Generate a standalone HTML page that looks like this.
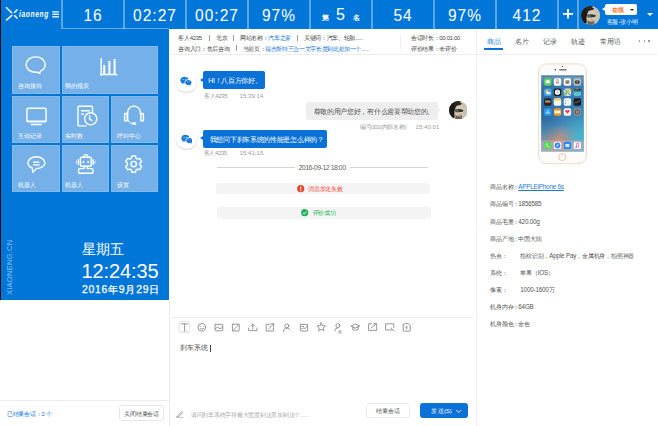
<!DOCTYPE html>
<html><head><meta charset="utf-8">
<style>
*{margin:0;padding:0;box-sizing:border-box}
html,body{width:658px;height:426px;overflow:hidden;background:#fff;font-family:"Liberation Sans",sans-serif;position:relative}
.a{position:absolute}
.hdr{left:0;top:0;width:658px;height:29px;background:#0076d8}
.edge{left:0;top:0;width:1px;height:300px;background:#1a0c0c}
.box{top:0;height:29px;width:62px;border-left:2px solid rgba(255,255,255,.36);color:#fff;font-size:15.5px;text-align:center;line-height:29px;letter-spacing:1px;text-indent:0}
.box span{display:inline-block;transform:scaleY(1.09);transform-origin:50% 60%;position:relative;top:0.9px}
.lp{left:0;top:29px;width:169px;height:271px;background:#0076d8}
.tile{background:#75b1e8;box-shadow:inset 0 0 0 1px rgba(255,255,255,.12);color:#fff;font-size:6px;font-weight:500}
.tile span{position:absolute;left:6px;bottom:3.5px;white-space:nowrap}
.t{white-space:nowrap;line-height:1}
.i1{color:#4a4a4a;font-size:6px;font-weight:500;letter-spacing:-0.35px}
.av{width:20.5px;height:20.5px;border-radius:50%;background:#fff;box-shadow:0 0.8px 1.6px rgba(0,0,0,.2)}
.bb{background:#0a72d6;border-radius:2px}
.bt{color:#fff;font-size:7px;letter-spacing:-0.3px}
.pr{color:#555;font-size:6.3px;letter-spacing:-0.2px}
.mt{color:#999;font-size:6px;letter-spacing:-0.35px}
</style></head><body>
<div class="a hdr"></div>
<!-- header boxes -->
<div class="a box" style="left:61px"><span>16</span></div>
<div class="a box" style="left:123px"><span>02:27</span></div>
<div class="a box" style="left:185px"><span>00:27</span></div>
<div class="a box" style="left:247px"><span>97%</span></div>
<div class="a box" style="left:309px"></div>
<div class="a box" style="left:371px"><span>54</span></div>
<div class="a box" style="left:433px"><span>97%</span></div>
<div class="a box" style="left:495px"><span>412</span></div>
<div class="a box" style="left:557px;width:22px;border-right:2px solid rgba(255,255,255,.36)"></div>

<!-- left panel -->
<div class="a lp"></div>
<div class="a" style="left:63px;top:28px;width:106px;height:1px;background:rgba(255,255,255,.4)"></div>

<div class="a edge"></div>
<!-- tiles -->
<div class="a tile" style="left:12px;top:46px;width:48px;height:48px"><span style="left:6.3px;bottom:3.5px">咨询接待</span></div>
<div class="a tile" style="left:61.5px;top:46px;width:96.5px;height:48px"><span style="left:3.3px;bottom:3.5px">我的报表</span></div>
<div class="a tile" style="left:12px;top:96px;width:48px;height:47px"><span style="left:6.3px;bottom:2.2px">互动记录</span></div>
<div class="a tile" style="left:61.5px;top:96px;width:47.5px;height:47px"><span style="left:3.3px;bottom:2.2px">实时数</span></div>
<div class="a tile" style="left:111px;top:96px;width:47px;height:47px"><span style="left:6.3px;bottom:2.2px">呼叫中心</span></div>
<div class="a tile" style="left:12px;top:145px;width:48px;height:47px"><span style="left:6.3px;bottom:2.0px">机器人</span></div>
<div class="a tile" style="left:61.5px;top:145px;width:47.5px;height:47px"><span style="left:3.3px;bottom:2.0px">机器人</span></div>
<div class="a tile" style="left:111px;top:145px;width:47px;height:47px"><span style="left:6.3px;bottom:2.0px">设置</span></div>

<!-- tile icons -->
<svg class="a" style="left:0;top:0" width="169" height="300" viewBox="0 0 169 300">
<g fill="none" stroke="#fff" stroke-width="1.4" stroke-linejoin="round" stroke-linecap="round">
<path d="M40.2,71.3 C43.5,70 45.2,67.5 45.2,64.6 C45.2,60.2 40.9,56.9 35.6,56.9 C30.3,56.9 26.1,60.2 26.1,64.6 C26.1,69 30.3,72.3 35.6,72.3 L37.6,72.3 L39.8,73.4 Z"/>
<line x1="101.2" y1="58.7" x2="101.2" y2="75"/>
<line x1="100.5" y1="74.5" x2="117" y2="74.5"/>
<rect x="26.9" y="108.3" width="19.2" height="13.5" rx="1.5"/>
<line x1="27.2" y1="121.3" x2="45.8" y2="121.3" stroke-width="1.6"/>
<line x1="31.4" y1="124.5" x2="41.3" y2="124.5"/>
<path d="M92.5,112 L92.5,107.5 Q92.5,106.3 91.3,106.3 L79.2,106.3 Q78,106.3 78,107.5 L78,124.7 Q78,125.9 79.2,125.9 L86,125.9"/>
<line x1="81.5" y1="110.7" x2="89.5" y2="110.7"/>
<line x1="81.5" y1="114.3" x2="83.3" y2="114.3"/>
<circle cx="90.7" cy="118.8" r="6.1" fill="#75b1e8"/>
<path d="M89.6,115.8 L89.6,119 L92,120.6"/>
<path d="M127.7,118.5 L127.7,112.6 C127.7,108.6 130.4,106.2 134,106.2 C137.6,106.2 140.3,108.6 140.3,112.6 L140.3,114"/>
<rect x="124.6" y="113.5" width="2.5" height="7.4" rx="0.5"/>
<rect x="140.9" y="113.5" width="2.5" height="7.4" rx="0.5"/>
<path d="M127.7,118.5 Q128.3,123.4 132.2,123.4" stroke-width="1"/>
<path d="M36.2,168.6 C41.4,168.4 44.9,165.8 44.9,163 C44.9,159.6 41.2,156.7 36.4,156.7 C31.6,156.7 27.9,159.6 27.9,163 C27.9,165.2 29.6,167 32.3,168 L32.8,172.4 Z"/>
<line x1="33.8" y1="162.2" x2="38.6" y2="162.2"/>
<line x1="33.6" y1="164.9" x2="39.2" y2="164.9"/>
<rect x="80.4" y="157.2" width="10.8" height="9" rx="1"/>
<path d="M84,157 L84,155.8 Q84,154.6 85.8,154.6 Q87.6,154.6 87.6,155.8 L87.6,157"/>
<path d="M84.3,166.3 L84.3,168.6 L79.6,168.6 Q78.6,168.6 78.6,169.6 L78.6,172.3 Q78.6,173.2 79.6,173.2 L92,173.2 Q93,173.2 93,172.3 L93,169.6 Q93,168.6 92,168.6 L87.3,168.6 L87.3,166.3"/>
<line x1="78.4" y1="159.8" x2="78.4" y2="164.4"/>
<line x1="93.2" y1="159.8" x2="93.2" y2="164.4"/>
<path d="M131.34,158.26 L131.83,156.01 L135.57,156.01 L136.06,158.26 L137.58,159.14 L139.77,158.44 L141.64,161.67 L139.94,163.22 L139.94,164.98 L141.64,166.53 L139.77,169.76 L137.58,169.06 L136.06,169.94 L135.57,172.19 L131.83,172.19 L131.34,169.94 L129.82,169.06 L127.63,169.76 L125.76,166.53 L127.46,164.98 L127.46,163.22 L125.76,161.67 L127.63,158.44 L129.82,159.14Z"/>
<circle cx="133.7" cy="164.1" r="2.7"/>
</g>
<g fill="#fff">
<rect x="103.2" y="65" width="2" height="9.5"/>
<rect x="108.4" y="61" width="2" height="13.5"/>
<rect x="113.6" y="59" width="2" height="15.5"/>
<circle cx="83.3" cy="161.9" r="1"/>
<circle cx="88.1" cy="161.9" r="1"/>
<rect x="132" y="122.2" width="4.2" height="2.5" rx="1"/>
</g>
<g stroke="#fff" stroke-width="0.8" fill="none">
<line x1="76.5" y1="160.6" x2="76.5" y2="163.6"/>
<line x1="95" y1="160.6" x2="95" y2="163.6"/>
</g>
<text x="7" y="295" transform="rotate(-90 7 295)" dx="0" dy="5.3" fill="rgba(255,255,255,0.55)" font-size="7.6" letter-spacing="0.2" font-family="Liberation Sans, sans-serif">XIAONENG.CN</text>
</svg>
<!-- clock -->
<div class="a t" style="left:82px;top:242px;color:#fff;font-size:14px;font-weight:500">星期五</div>
<div class="a t" style="left:81.5px;top:261px;color:#fff;font-size:20px;letter-spacing:-0.1px">12:24:35</div>
<div class="a t" style="left:82px;top:284.5px;color:#fff;font-size:10.4px;font-weight:500;letter-spacing:0.75px;-webkit-text-stroke:0.25px #fff">2016年9月29日</div>


<!-- logo -->
<svg class="a" style="left:0;top:0" width="61" height="29" viewBox="0 0 61 29">
<g stroke="#fff" stroke-width="1.5" stroke-linecap="butt" fill="none">
<line x1="6" y1="7.2" x2="12.2" y2="13.2"/>
<line x1="6" y1="20.5" x2="12.2" y2="15.1"/>
<line x1="17.4" y1="9.4" x2="14.2" y2="12.8"/>
<line x1="14.2" y1="15.2" x2="17.4" y2="18.6"/>
</g>
<g fill="#fff"><rect x="52.3" y="11.3" width="6.6" height="1.3"/><rect x="52.3" y="13.7" width="6.6" height="1.3"/><rect x="52.3" y="16.2" width="6.6" height="1.3"/></g>
</svg>
<div class="a t" style="left:18.5px;top:9px;color:#fff;font-size:9.8px;font-style:italic;font-weight:bold;letter-spacing:0.9px;transform:scaleX(0.68);transform-origin:0 0">iaoneng</div>
<!-- rank -->
<div class="a t" style="left:321.5px;top:14px;color:#fff;font-size:7px;font-weight:bold">第</div>
<div class="a t" style="left:336px;top:7px;color:#fff;font-size:16px">5</div>
<div class="a t" style="left:353.3px;top:14px;color:#fff;font-size:7px;font-weight:bold">名</div>
<!-- plus -->
<svg class="a" style="left:563px;top:9.3px" width="10" height="10"><rect x="0" y="4" width="10" height="1.8" fill="#fff"/><rect x="4.1" y="0" width="1.8" height="9.6" fill="#fff"/></svg>
<!-- avatar header -->
<svg class="a" style="left:580.8px;top:5.6px" width="19.0" height="19.0" viewBox="0 0 20 20"><defs><clipPath id="cf1"><circle cx="10" cy="10" r="10"/></clipPath></defs><g clip-path="url(#cf1)"><rect width="20" height="20" fill="#b8b0a2"/><rect x="11" y="0" width="9" height="20" fill="#c9c2b4"/><path d="M0,0 L13,0 Q9,3 7,7 Q5,12 6,17 L4,20 L0,20 Z" fill="#1c1814"/><path d="M5,2 Q10,-1 14,3 L11,5 Q8,4 6,7 Z" fill="#2a2824"/><ellipse cx="11" cy="11" rx="4.6" ry="6.5" fill="#d9c8b6"/><path d="M6.5,9.2 Q11,8 15.5,9.6 L15,11.6 Q12,12 10,12.2 L7,12 Z" fill="#2e3a34"/><ellipse cx="9" cy="10.6" rx="1.4" ry="0.9" fill="#6a8078"/><path d="M7,15 Q11,17.5 14,15 L14,20 L7,20 Z" fill="#3a3028" opacity="0.6"/><ellipse cx="11.5" cy="14.5" rx="1.5" ry="0.6" fill="#9a7060" opacity="0.7"/></g></svg>
<div class="a" style="left:605.3px;top:4.1px;width:32px;height:10.5px;background:#fff;border-radius:2px"></div>
<div class="a" style="left:602.1px;top:7px;width:0;height:0;border-top:2.2px solid transparent;border-bottom:2.2px solid transparent;border-right:3.3px solid #fff"></div>
<div class="a t" style="left:612.4px;top:6.6px;color:#f5731e;font-size:6px;font-weight:bold;letter-spacing:-0.3px">在线</div>
<div class="a" style="left:630.3px;top:8.6px;width:0;height:0;border-left:2px solid transparent;border-right:2px solid transparent;border-top:2.2px solid #222"></div>
<div class="a t" style="left:606.6px;top:19.3px;color:#f2f7fd;font-size:6px;font-weight:500;letter-spacing:-0.2px">客服-张小明</div>
<div class="a" style="left:646.8px;top:13.2px;width:0;height:0;border-left:3.2px solid transparent;border-right:3.2px solid transparent;border-top:3.7px solid #fff"></div>

<!-- bottom left -->
<div class="a" style="left:0;top:400px;width:169px;height:1px;background:#ececec"></div>
<div class="a" style="left:169px;top:300px;width:1px;height:126px;background:#ececec"></div>
<div class="a t" style="left:6.8px;top:410.9px;color:#1a78d8;font-size:6px;letter-spacing:-0.2px">已结束会话：2 个</div>
<div class="a t" style="left:119px;top:405.2px;width:45.2px;height:16px;border:1px solid #e6e6e6;border-radius:3px;color:#555;font-size:6px;letter-spacing:-0.2px;text-align:center;line-height:17.3px">关闭结束会话</div>

<!-- info bar -->
<div class="a t i1" style="left:178.4px;top:35px">客人4235</div>
<div class="a" style="left:209.2px;top:35.3px;width:0.9px;height:5.6px;background:#9a9a9a"></div>
<div class="a t i1" style="left:216px;top:35px">北京</div>
<div class="a" style="left:233.1px;top:35.3px;width:0.9px;height:5.6px;background:#9a9a9a"></div>
<div class="a t i1" style="left:240.1px;top:35px">网站名称：</div>
<div class="a t i1" style="left:268.3px;top:35px;color:#1a78d8">汽车之家</div>
<div class="a" style="left:297px;top:35.3px;width:0.9px;height:5.6px;background:#9a9a9a"></div>
<div class="a t i1" style="left:304px;top:35px">关键词：汽车、轮胎......</div>
<div class="a t i1" style="left:178.4px;top:45.6px">咨询入口：售后咨询</div>
<div class="a" style="left:235.6px;top:45.3px;width:0.9px;height:5.6px;background:#9a9a9a"></div>
<div class="a t i1" style="left:242.8px;top:45.6px">当前页：</div>
<div class="a t i1" style="left:265.1px;top:45.6px;color:#1a78d8">福吉斯特三合一文字长度到此处加一个......</div>
<div class="a" style="left:400px;top:35px;width:1px;height:14px;background:#eee"></div>
<div class="a t i1" style="left:411.1px;top:35px">会话时长：00:01:00</div>
<div class="a t i1" style="left:411.1px;top:45.6px">评价结果：未评价</div>
<div class="a" style="left:170px;top:54px;width:306px;height:1px;background:#eee"></div>
<div class="a" style="left:476px;top:29px;width:1px;height:397px;background:#eee"></div>

<!-- messages -->
<div class="a av" style="left:176px;top:71px"></div>
<svg class="a" style="left:180.2px;top:76px" width="11.8" height="10" viewBox="0 0 14 12"><path fill="#1a78d8" d="M5.2,1 C2.4,1 0.3,2.8 0.3,5 C0.3,6.2 1,7.3 2,8 L1.6,9.6 L3.5,8.6 C4,8.8 4.6,8.9 5.2,8.9 C5.3,8.9 5.4,8.9 5.5,8.9 C5.4,8.5 5.3,8.1 5.3,7.7 C5.3,5.5 7.4,3.8 10,3.8 C10.1,3.8 10.2,3.8 10.3,3.8 C9.7,2.2 7.6,1 5.2,1Z"/><path fill="#1a78d8" d="M10,4.8 C7.8,4.8 6.1,6.2 6.1,7.9 C6.1,9.6 7.8,11 10,11 C10.5,11 10.9,10.9 11.3,10.8 L12.8,11.6 L12.5,10.3 C13.3,9.7 13.8,8.9 13.8,7.9 C13.8,6.2 12.1,4.8 10,4.8Z"/><g fill="#fff"><circle cx="3.6" cy="3.9" r="0.6"/><circle cx="6.8" cy="3.9" r="0.6"/><circle cx="8.7" cy="7" r="0.5"/><circle cx="11.3" cy="7" r="0.5"/></g></svg>
<div class="a bb" style="left:203.2px;top:71.3px;width:61.8px;height:17.8px"></div>
<div class="a" style="left:200px;top:77.9px;width:0;height:0;border-top:2.5px solid transparent;border-bottom:2.5px solid transparent;border-right:3.2px solid #0a72d6"></div>
<div class="a t bt" style="left:208.3px;top:76.9px">HI！八百方你好。</div>
<div class="a t mt" style="left:203.9px;top:93px">客人4235</div>
<div class="a t mt" style="left:239.6px;top:93px;letter-spacing:0.05px">15:39:14</div>

<div class="a" style="left:305.5px;top:102px;width:132.8px;height:17.6px;background:#eeeeee;border-radius:2px"></div>
<div class="a" style="left:438.3px;top:107.6px;width:0;height:0;border-top:2.5px solid transparent;border-bottom:2.5px solid transparent;border-left:3.2px solid #eeeeee"></div>
<div class="a t bt" style="left:313.5px;top:107.6px;color:#555">尊敬的用户您好，有什么需要帮助您的。</div>
<div class="a t mt" style="left:359.9px;top:124px">编号001(内部名称)</div>
<div class="a t mt" style="left:415.6px;top:124px;letter-spacing:0.05px">15:40:01</div>
<svg class="a" style="left:448.5px;top:100.8px" width="18.6" height="18.6" viewBox="0 0 20 20"><defs><clipPath id="cf2"><circle cx="10" cy="10" r="10"/></clipPath></defs><g clip-path="url(#cf2)"><rect width="20" height="20" fill="#b8b0a2"/><rect x="11" y="0" width="9" height="20" fill="#c9c2b4"/><path d="M0,0 L13,0 Q9,3 7,7 Q5,12 6,17 L4,20 L0,20 Z" fill="#1c1814"/><path d="M5,2 Q10,-1 14,3 L11,5 Q8,4 6,7 Z" fill="#2a2824"/><ellipse cx="11" cy="11" rx="4.6" ry="6.5" fill="#d9c8b6"/><path d="M6.5,9.2 Q11,8 15.5,9.6 L15,11.6 Q12,12 10,12.2 L7,12 Z" fill="#2e3a34"/><ellipse cx="9" cy="10.6" rx="1.4" ry="0.9" fill="#6a8078"/><path d="M7,15 Q11,17.5 14,15 L14,20 L7,20 Z" fill="#3a3028" opacity="0.6"/><ellipse cx="11.5" cy="14.5" rx="1.5" ry="0.6" fill="#9a7060" opacity="0.7"/></g></svg>

<div class="a av" style="left:176.3px;top:128.7px"></div>
<svg class="a" style="left:180.5px;top:133.8px" width="11.8" height="10" viewBox="0 0 14 12"><path fill="#1a78d8" d="M5.2,1 C2.4,1 0.3,2.8 0.3,5 C0.3,6.2 1,7.3 2,8 L1.6,9.6 L3.5,8.6 C4,8.8 4.6,8.9 5.2,8.9 C5.3,8.9 5.4,8.9 5.5,8.9 C5.4,8.5 5.3,8.1 5.3,7.7 C5.3,5.5 7.4,3.8 10,3.8 C10.1,3.8 10.2,3.8 10.3,3.8 C9.7,2.2 7.6,1 5.2,1Z"/><path fill="#1a78d8" d="M10,4.8 C7.8,4.8 6.1,6.2 6.1,7.9 C6.1,9.6 7.8,11 10,11 C10.5,11 10.9,10.9 11.3,10.8 L12.8,11.6 L12.5,10.3 C13.3,9.7 13.8,8.9 13.8,7.9 C13.8,6.2 12.1,4.8 10,4.8Z"/><g fill="#fff"><circle cx="3.6" cy="3.9" r="0.6"/><circle cx="6.8" cy="3.9" r="0.6"/><circle cx="8.7" cy="7" r="0.5"/><circle cx="11.3" cy="7" r="0.5"/></g></svg>
<div class="a bb" style="left:203.1px;top:130.4px;width:123.9px;height:17.2px"></div>
<div class="a" style="left:200px;top:136px;width:0;height:0;border-top:2.5px solid transparent;border-bottom:2.5px solid transparent;border-right:3.2px solid #0a72d6"></div>
<div class="a t bt" style="left:209.8px;top:135.9px">我想问下刹车系统的性能是怎么样的？</div>
<div class="a t mt" style="left:203.6px;top:149.5px">客人4235</div>
<div class="a t mt" style="left:239.6px;top:149.5px;letter-spacing:0.05px">15:41:15</div>

<div class="a" style="left:217px;top:167px;width:77.8px;height:1px;background:#d4d4d4"></div>
<div class="a t" style="left:298.4px;top:163.6px;color:#666;font-size:7px;letter-spacing:-0.5px">2016-09-12 18:00</div>
<div class="a" style="left:350.2px;top:167px;width:77.5px;height:1px;background:#d4d4d4"></div>

<div class="a" style="left:216px;top:183.2px;width:213.5px;height:11.3px;background:#f4f4f4;border-radius:3px"></div>
<svg class="a" style="left:297px;top:185.1px" width="8" height="8" viewBox="0 0 8 8"><circle cx="3.7" cy="3.7" r="3.6" fill="#e5452e"/><rect x="3.15" y="1.5" width="1.1" height="3" fill="#fff"/><rect x="3.15" y="5.1" width="1.1" height="1.1" fill="#fff"/></svg>
<div class="a t mt" style="left:308.4px;top:186px;color:#f03c2c">消息发送失败</div>
<div class="a" style="left:217.3px;top:206.9px;width:213.7px;height:11.7px;background:#f4f4f4;border-radius:3px"></div>
<svg class="a" style="left:301.3px;top:209px" width="8" height="8" viewBox="0 0 8 8"><circle cx="3.7" cy="3.7" r="3.6" fill="#1fb45a"/><path d="M2,3.8 L3.2,5 L5.4,2.7" stroke="#fff" stroke-width="1" fill="none"/></svg>
<div class="a t mt" style="left:312.8px;top:209.5px;color:#20b45a">评价成功</div>

<!-- toolbar -->
<div class="a" style="left:172px;top:317px;width:301px;height:1px;background:#eee"></div>
<div class="a" style="left:179.3px;top:321.3px;width:11.1px;height:11.1px;border:1px solid #e8e8e8;border-radius:1.5px;box-shadow:0 0.5px 1.5px rgba(0,0,0,.12)"></div>
<svg class="a" style="left:170px;top:316px" width="250" height="22" viewBox="170 316 250 22">
<g fill="none" stroke="#8a8a8a" stroke-width="0.9" stroke-linejoin="round" stroke-linecap="round">
<path d="M181.3,323.9 L188,323.9 M184.65,323.9 L184.65,331"/>
<circle cx="201.8" cy="327.4" r="3.8"/>
<path d="M200.2,326.6 L200.3,326.6 M203.3,326.6 L203.4,326.6 M200,328.6 Q201.8,330 203.6,328.6"/>
<rect x="215" y="324.3" width="7.8" height="6.5" rx="0.6"/>
<path d="M215.3,328.6 L217.6,327 L220,328.8 L222.6,327.3"/>
<rect x="232.4" y="324.2" width="6.8" height="6.8" rx="0.5"/>
<path d="M232.4,331 L239.2,324.2"/>
<path d="M248.6,328 L248.6,330.6 L257,330.6 L257,328 M252.8,329 L252.8,324.2 M250.9,326 L252.8,324.1 L254.7,326"/>
<path d="M269.5,324.3 L266.2,324.3 L266.2,331 L273.4,331 L273.4,327.8 M268.6,329 L273.6,323.8 M270.8,323.8 L273.6,323.8 L273.6,326.6"/>
<circle cx="286.8" cy="325.8" r="2"/>
<path d="M283.2,331.6 Q283.6,328.3 286.8,328.1 Q288.8,328.2 289.8,329.4"/>
<rect x="300.3" y="324.4" width="7.3" height="6.6" rx="0.5"/>
<path d="M301.8,326.6 L303.6,326.6 M301.8,328.6 L303,328.6 M304.2,327.8 L305,328.8 L307.4,325.8"/>
<path d="M321.2,322.9 L322.4,325.6 L325.4,325.9 L323.2,327.8 L323.9,330.8 L321.2,329.3 L318.5,330.8 L319.2,327.8 L317,325.9 L320,325.6 Z"/>
<circle cx="337.9" cy="325.6" r="2"/>
<path d="M335,331 L335,329.6 Q335,328 337.9,328 M339.9,330.9 A1.2,1.2 0 1 0 340,330.9"/>
<path d="M351.2,326 L355.5,324 L359.8,326 L355.5,328 Z M352.8,326.8 L352.8,329.5 Q355.5,331.2 358.2,329.5 L358.2,326.8"/>
<path d="M371.5,323.8 L368.6,323.8 L368.6,330.4 L376.7,330.4 L376.7,327.3 M371,328.1 L376.4,323.8 M373.6,323.8 L376.6,323.8 L376.6,326.4"/>
<path d="M392,330 L385.6,330 L385.6,323.8 L393.8,323.8 L393.8,327.5 M391,328.1 L394,331"/>
<path d="M403.2,325 L403.2,330.6 Q403.2,331.2 403.8,331.2 L409.6,331.2 Q410.2,331.2 410.2,330.6 L410.2,325.4 L408.3,323.6 L404.6,323.6 Q403.2,323.6 403.2,325 Z M406.8,326.6 L406.8,329 M405.6,327.8 L406.8,326.6"/>
</g>
</svg>
<div class="a t" style="left:180px;top:344px;color:#555;font-size:7px">刹车系统</div>
<div class="a" style="left:210px;top:345px;width:1px;height:7px;background:#444"></div>
<svg class="a" style="left:176px;top:410px" width="8" height="8" viewBox="0 0 8 8"><g fill="none" stroke="#999" stroke-width="0.9" stroke-linecap="round"><path d="M1.5,5.8 L5.8,1.5 L6.8,2.5 L2.5,6.8 L1.2,7 Z"/><path d="M0.6,7.4 L7,7.4" stroke="#bbb"/></g></svg>
<div class="a t" style="left:191px;top:411.5px;color:#aaa;font-size:6px;letter-spacing:-0.26px">请问刹车系统字符最大宽度到这里加到这个......</div>
<div class="a t" style="left:366.2px;top:403.3px;width:43.5px;height:14.7px;border:1px solid #ececec;border-radius:3px;color:#555;font-size:6px;text-align:center;line-height:14.5px">结束会话</div>
<div class="a" style="left:420.2px;top:403.3px;width:48px;height:14.7px;background:#0a72d6;border-radius:3px"></div>
<div class="a t" style="left:430.6px;top:408px;color:#fff;font-size:6px;letter-spacing:-0.1px">发 送(S)</div>
<svg class="a" style="left:455px;top:409px" width="8" height="5" viewBox="0 0 8 5"><path d="M1.2,1 L3.7,3.5 L6.2,1" fill="none" stroke="#fff" stroke-width="0.9"/></svg>

<!-- right panel tabs -->
<div class="a t" style="left:487px;top:37.7px;color:#1a78d8;font-size:7px">商品</div>
<div class="a" style="left:484px;top:48px;width:19px;height:2px;background:#0a72d6"></div>
<div class="a t" style="left:515px;top:37.7px;color:#555;font-size:7px">名片</div>
<div class="a t" style="left:543px;top:37.7px;color:#555;font-size:7px">记录</div>
<div class="a t" style="left:571px;top:37.7px;color:#555;font-size:7px">轨迹</div>
<div class="a t" style="left:600px;top:37.7px;color:#555;font-size:7px">常用语</div>
<div class="a" style="left:638.5px;top:40px;width:1.7px;height:1.7px;border-radius:50%;background:#849090"></div>
<div class="a" style="left:643.5px;top:40px;width:1.7px;height:1.7px;border-radius:50%;background:#849090"></div>
<div class="a" style="left:648px;top:40px;width:1.7px;height:1.7px;border-radius:50%;background:#849090"></div>
<div class="a" style="left:477px;top:54px;width:180px;height:1px;background:#eee"></div>

<!-- phone -->
<svg class="a" style="left:530px;top:60px" width="66" height="110" viewBox="530 60 66 110">
<defs>
<linearGradient id="wp" x1="0" y1="0" x2="0" y2="1">
<stop offset="0" stop-color="#6f9fc0"/>
<stop offset="0.15" stop-color="#3a78ae"/>
<stop offset="0.55" stop-color="#3a7fb4"/>
<stop offset="0.8" stop-color="#5a9ec4"/>
<stop offset="1" stop-color="#58aac6"/>
</linearGradient>
<radialGradient id="wr" cx="0.42" cy="0.86" r="0.55" gradientTransform="translate(0.42,0.86) scale(1,0.4) translate(-0.42,-0.86)">
<stop offset="0" stop-color="#d98a66" stop-opacity="0.9"/>
<stop offset="0.55" stop-color="#c88a78" stop-opacity="0.45"/>
<stop offset="1" stop-color="#c88a78" stop-opacity="0"/>
</radialGradient>
<radialGradient id="wt" cx="0.92" cy="0.82" r="0.42">
<stop offset="0" stop-color="#40b8d0" stop-opacity="0.8"/>
<stop offset="1" stop-color="#40b8d0" stop-opacity="0"/>
</radialGradient>
<radialGradient id="wd" cx="0.05" cy="0.45" r="0.5">
<stop offset="0" stop-color="#1f5a92" stop-opacity="0.6"/>
<stop offset="1" stop-color="#1f5a92" stop-opacity="0"/>
</radialGradient>
</defs>
<rect x="538.6" y="63.9" width="47.8" height="99.8" rx="7.6" fill="#fdfcfa" stroke="#e9d9bd" stroke-width="0.9"/>
<rect x="539.3" y="64.6" width="46.4" height="98.4" rx="7" fill="none" stroke="#f6efe4" stroke-width="0.5"/>
<circle cx="562.5" cy="66.4" r="0.55" fill="#444"/>
<circle cx="555.3" cy="69.8" r="0.8" fill="#333"/>
<rect x="559" y="69.1" width="7.6" height="1.3" rx="0.65" fill="#777"/>
<rect x="541.2" y="75.3" width="42.6" height="76.3" fill="url(#wp)"/>
<rect x="541.2" y="75.3" width="42.6" height="76.3" fill="url(#wr)"/>
<rect x="541.2" y="75.3" width="42.6" height="76.3" fill="url(#wt)"/>
<rect x="541.2" y="75.3" width="42.6" height="76.3" fill="url(#wd)"/>
<rect x="541.2" y="75.3" width="42.6" height="1.6" fill="#000" opacity="0.15"/>
<rect x="541.2" y="140.4" width="42.6" height="11.2" fill="#dcb4bc" opacity="0.45"/>
<rect x="544.10" y="78.30" width="7.4" height="7.4" rx="1.7" fill="#5ad75a"/><rect x="553.80" y="78.30" width="7.4" height="7.4" rx="1.7" fill="#fdfdfd"/><rect x="563.70" y="78.30" width="7.4" height="7.4" rx="1.7" fill="#fbfbfb"/><rect x="573.60" y="78.30" width="7.4" height="7.4" rx="1.7" fill="#bdbdbd"/><rect x="544.10" y="88.50" width="7.4" height="7.4" rx="1.7" fill="#4aa6ee"/><rect x="553.80" y="88.50" width="7.4" height="7.4" rx="1.7" fill="#1c1c1c"/><rect x="563.70" y="88.50" width="7.4" height="7.4" rx="1.7" fill="#e8e4c0"/><rect x="573.60" y="88.50" width="7.4" height="7.4" rx="1.7" fill="#58c4d4"/><rect x="544.10" y="98.30" width="7.4" height="7.4" rx="1.7" fill="#222222"/><rect x="553.80" y="98.30" width="7.4" height="7.4" rx="1.7" fill="#fafafa"/><rect x="563.70" y="98.30" width="7.4" height="7.4" rx="1.7" fill="#fafafa"/><rect x="573.60" y="98.30" width="7.4" height="7.4" rx="1.7" fill="#1a1a1a"/><rect x="544.10" y="108.30" width="7.4" height="7.4" rx="1.7" fill="#2a9af0"/><rect x="553.80" y="108.30" width="7.4" height="7.4" rx="1.7" fill="#f59a23"/><rect x="563.70" y="108.30" width="7.4" height="7.4" rx="1.7" fill="#fafafa"/><rect x="573.60" y="108.30" width="7.4" height="7.4" rx="1.7" fill="#8e8e8e"/>
<ellipse cx="547.8" cy="81.7" rx="2.3" ry="1.8" fill="#fff"/><rect x="556.3" y="79.6" width="2.4" height="0.8" fill="#e04030"/><rect x="556" y="81.4" width="3" height="2.2" fill="#555" opacity="0.5"/><circle cx="566.6" cy="81.3" r="1.3" fill="#f4b400"/><circle cx="568.2" cy="81.3" r="1.3" fill="#34a853" opacity="0.8"/><circle cx="567.4" cy="82.8" r="1.3" fill="#4285f4" opacity="0.8"/><circle cx="566.4" cy="82.6" r="1.2" fill="#ea4335" opacity="0.7"/><circle cx="568.4" cy="82.6" r="1.2" fill="#a142f4" opacity="0.6"/><rect x="575.1" y="80.6" width="4.4" height="3.2" rx="0.6" fill="#333"/><circle cx="577.3" cy="82.2" r="0.9" fill="#888"/><circle cx="546.9" cy="91.4" r="1.4" fill="#ffd23c"/><ellipse cx="548.5" cy="93.2" rx="2.2" ry="1.1" fill="#fff"/><circle cx="557.5" cy="92.2" r="2.6" fill="#fafafa"/><path d="M557.5,90.6 L557.5,92.2 L558.6,92.8" stroke="#222" stroke-width="0.35" fill="none"/><path d="M564,88.8 L570.9,95.6" stroke="#5aa0f0" stroke-width="1.2"/><rect x="564" y="92.2" width="3" height="3.4" fill="#70c060" opacity="0.8"/><rect x="567.4" y="88.8" width="3.4" height="3" fill="#f0c040" opacity="0.8"/><rect x="573.9" y="88.8" width="6.8" height="2.6" fill="#222"/><path d="M574.5,89.2 L575.5,91 M576.3,89.2 L577.3,91 M578.1,89.2 L579.1,91" stroke="#eee" stroke-width="0.5"/><rect x="545.2" y="100.4" width="5.2" height="0.8" fill="#4cb5e8"/><rect x="545.2" y="101.3" width="5.2" height="0.8" fill="#f5b942"/><rect x="545.2" y="102.2" width="5.2" height="0.8" fill="#e8533b"/><path d="M555.7,98.6 L559.3,98.6 Q560.9,98.6 560.9,100.2 L560.9,100.4 L554.1,100.4 L554.1,100.2 Q554.1,98.6 555.7,98.6 Z" fill="#ffcc33"/><path d="M555,101.8 L560,101.8 M555,103 L560,103 M555,104.2 L560,104.2" stroke="#ddd" stroke-width="0.3"/><circle cx="565.4" cy="100.5" r="0.5" fill="#f08030"/><circle cx="565.4" cy="102" r="0.5" fill="#5ac850"/><circle cx="565.4" cy="103.5" r="0.5" fill="#3a90f0"/><path d="M566.4,100.5 L569.8,100.5 M566.4,102 L569.8,102 M566.4,103.5 L569.8,103.5" stroke="#ccc" stroke-width="0.3"/><path d="M574.4,103.5 L575.8,102 L577,102.8 L578.4,100.8 L580,101.4" stroke="#fff" stroke-width="0.35" fill="none"/><path d="M546.2,114 L547.8,110.3 L549.4,114 M545.6,112.8 L550,112.8" stroke="#fff" stroke-width="0.5" fill="none"/><path d="M554.6,113.4 L554.6,110.8 Q556,110.2 557.5,110.9 Q559,110.2 560.4,110.8 L560.4,113.4 Q559,112.8 557.5,113.5 Q556,112.8 554.6,113.4 Z" fill="#fff"/><path d="M567.4,113.8 L565.3,111.6 Q564.6,110.6 565.6,110 Q566.6,109.6 567.4,110.6 Q568.2,109.6 569.2,110 Q570.2,110.6 569.5,111.6 Z" fill="#f0385a"/><circle cx="577.3" cy="112" r="2.6" fill="#5a5a5a"/><circle cx="577.3" cy="112" r="1.6" fill="#aaa"/><circle cx="577.3" cy="112" r="0.7" fill="#555"/>
<rect x="544.10" y="141.70" width="7.4" height="7.4" rx="1.7" fill="#5ad75a"/><rect x="553.80" y="141.70" width="7.4" height="7.4" rx="1.7" fill="#f8f8f8"/><rect x="563.70" y="141.70" width="7.4" height="7.4" rx="1.7" fill="#2a8af0"/><rect x="573.60" y="141.70" width="7.4" height="7.4" rx="1.7" fill="#fafafa"/><path d="M546.4,143.2 Q546,145 547.6,146.8 Q549.2,148 549.8,147.4 L549,146.5 L548.3,146.8 Q547.2,146 547,144.8 L547.6,144.4 L547.2,143.3 Z" fill="#fff"/><circle cx="557.5" cy="145.4" r="2.8" fill="#2a8af0"/><path d="M558.9,144 L557.9,145.9 L556.1,146.8 L557.1,144.9 Z" fill="#fff"/><rect x="565.5" y="144" width="3.8" height="2.8" fill="#fff"/><path d="M565.5,144 L567.4,145.6 L569.3,144" stroke="#2a8af0" stroke-width="0.35" fill="none"/><path d="M576.5,147.2 L576.5,143.4 L578.7,142.8 L578.7,146.6" stroke="#f03a6a" stroke-width="0.6" fill="none"/><circle cx="576" cy="147.3" r="0.7" fill="#f03a6a"/><circle cx="578.2" cy="146.7" r="0.7" fill="#a050f0"/>
<circle cx="562.3" cy="157.1" r="3.6" fill="#fbf8f2" stroke="#d4c2a2" stroke-width="0.8"/>
</svg>
<!-- product rows -->
<div class="a t pr" style="left:490.2px;top:184.20px">商品名称：</div><div class="a t pr" style="left:518.3px;top:184.20px"><span style="color:#1a78d8;text-decoration:underline">APPLEiPhone 6s</span></div>
<div class="a t pr" style="left:490.2px;top:201.35px">商品编号：</div><div class="a t pr" style="left:518.3px;top:201.35px">1856585</div>
<div class="a t pr" style="left:490.2px;top:218.50px">商品毛重：</div><div class="a t pr" style="left:518.3px;top:218.50px">420.00g</div>
<div class="a t pr" style="left:490.2px;top:235.65px">商品产地：</div><div class="a t pr" style="left:518.3px;top:235.65px">中国大陆</div>
<div class="a t pr" style="left:490.2px;top:252.80px">热点：</div><div class="a t pr" style="left:520.3px;top:252.80px">指纹识别，Apple Pay，金属机身，拍照神器</div>
<div class="a t pr" style="left:490.2px;top:269.95px">系统：</div><div class="a t pr" style="left:520.3px;top:269.95px">苹果（IOS）</div>
<div class="a t pr" style="left:490.2px;top:287.10px">像素：</div><div class="a t pr" style="left:520.3px;top:287.10px">1000-1600万</div>
<div class="a t pr" style="left:490.2px;top:304.25px">机身内存：</div><div class="a t pr" style="left:518.3px;top:304.25px">64GB</div>
<div class="a t pr" style="left:490.2px;top:321.40px">机身颜色：</div><div class="a t pr" style="left:518.3px;top:321.40px">金色</div>
</body></html>
